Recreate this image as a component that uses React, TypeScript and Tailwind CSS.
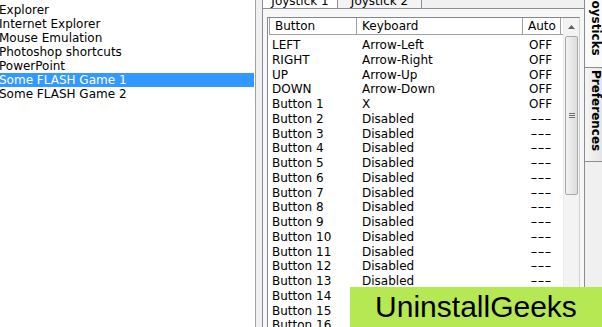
import React from "react";

const leftItems = [
  "Explorer",
  "Internet Explorer",
  "Mouse Emulation",
  "Photoshop shortcuts",
  "PowerPoint",
  "Some FLASH Game 1",
  "Some FLASH Game 2",
];

const rows: [string, string, string][] = [
  ["LEFT", "Arrow-Left", "OFF"],
  ["RIGHT", "Arrow-Right", "OFF"],
  ["UP", "Arrow-Up", "OFF"],
  ["DOWN", "Arrow-Down", "OFF"],
  ["Button 1", "X", "OFF"],
  ...Array.from({ length: 15 }, (_, i) => [`Button ${i + 2}`, "Disabled", "---"] as [string, string, string]),
];

export default function App() {
  return (
    <div className="relative w-[602px] h-[327px] overflow-hidden bg-[#f0f0f0] font-['DejaVu_Sans',sans-serif] text-[12px] leading-[14px] text-black flex">
      {/* Left list */}
      <div className="w-[256px] shrink-0 h-full bg-white border-r border-[#a0a0a0] pt-[3px] overflow-hidden">
        {leftItems.map((t, i) => (
          <div
            key={t}
            className={
              i === 5
                ? "h-[14px] whitespace-nowrap bg-[#3399ff] text-white mr-px"
                : "h-[14px] whitespace-nowrap"
            }
          >
            <span className="-ml-px">{t}</span>
          </div>
        ))}
      </div>

      {/* Middle: inner tab control */}
      <div className="w-[328px] shrink-0 h-full pl-[6px] flex flex-col">
        <div className="flex h-[20px] -mt-[12px] shrink-0">
          <div className="w-[76px] h-full border-l border-r border-[#898c95] bg-white text-center pt-[6px] whitespace-nowrap">
            Joystick 1
          </div>
          <div className="w-[84px] h-full border-r border-[#898c95] bg-[#f4f4f4] text-center pt-[6px] whitespace-nowrap">
            Joystick 2
          </div>
        </div>
        <div className="flex-1 border-l border-t border-[#898c95] bg-[#f7f7f7] pl-[4px] pt-[8px] overflow-hidden">
          <div className="w-[313px] h-[340px] border-l border-t border-r border-l-[#828790] border-t-[#828790] border-r-[#d0d0d0] bg-white flex">
            {/* content */}
            <div className="w-[295px] shrink-0 flex flex-col">
              <div className="flex h-[17px] leading-[16px] shrink-0">
                <div className="w-[88px] ml-px shrink-0 pl-[5px] border-l border-r border-b border-[#a0a0a0]">Button</div>
                <div className="w-[166px] shrink-0 pl-[5px] border-r border-b border-[#a0a0a0]">Keyboard</div>
                <div className="w-[38px] shrink-0 pl-[5px] border-r border-b border-[#a0a0a0]">Auto</div>
                <div className="flex-1 border-b border-[#a0a0a0]"></div>
              </div>
              <div className="pt-[3px] flex flex-col">
                {rows.map((r) => (
                  <div key={r[0]} className="flex h-[14.75px] leading-[14.75px] whitespace-nowrap">
                    <div className="w-[89px] shrink-0 pl-[4px]">{r[0]}</div>
                    <div className="w-[166px] shrink-0 pl-[5px]">{r[1]}</div>
                    <div className="w-[38px] shrink-0 pl-[6px]">
                      {r[2] === "---" ? (
                        <span className="inline-block origin-left scale-x-[1.6] pl-px">---</span>
                      ) : (
                        r[2]
                      )}
                    </div>
                  </div>
                ))}
              </div>
            </div>
            {/* scrollbar */}
            <div className="w-[16px] shrink-0 flex flex-col bg-[#f3f3f3] border-l border-[#ececec]">
              <div className="h-[17px] shrink-0 flex items-center justify-center">
                <svg width="7" height="4" viewBox="0 0 7 4">
                  <path d="M0 4 L3.5 0 L7 4 Z" fill="#606060" />
                </svg>
              </div>
              <div className="h-[159px] mt-px shrink-0 mx-px rounded-[2px] border border-[#a9a9a9] bg-gradient-to-r from-[#f2f2f2] to-[#dcdcdc] flex items-center justify-center">
                <svg width="6" height="6" viewBox="0 0 6 6">
                  <path d="M0 0.5 H6 M0 2.5 H6 M0 4.5 H6" stroke="#707070" strokeWidth="1" />
                </svg>
              </div>
              <div className="flex-1"></div>
            </div>
          </div>
        </div>
      </div>

      {/* Right vertical tabs */}
      <div className="w-[18px] shrink-0 h-full border-l border-[#898c95] flex flex-col font-bold">
        <div className="h-[67px] shrink-0 bg-[#fafafa] overflow-hidden pl-[4px]">
          <div className="[writing-mode:vertical-rl] -mt-[4px] whitespace-nowrap">Joysticks</div>
        </div>
        <div className="h-[95px] shrink-0 border-t border-b border-[#898c95] bg-gradient-to-r from-[#f6f6f6] to-[#e6e6e6] overflow-hidden pl-[4px] pt-[2px]">
          <div className="[writing-mode:vertical-rl] whitespace-nowrap">Preferences</div>
        </div>
        <div className="flex-1 bg-[#f0f0f0]"></div>
      </div>

      {/* Watermark */}
      <div className="absolute left-[350px] top-[287px] w-[252px] h-[40px] bg-[#b5e853] text-center text-[30px] leading-[40px] font-['Liberation_Sans',Arial,sans-serif] text-black whitespace-nowrap">
        UninstallGeeks
      </div>
    </div>
  );
}
